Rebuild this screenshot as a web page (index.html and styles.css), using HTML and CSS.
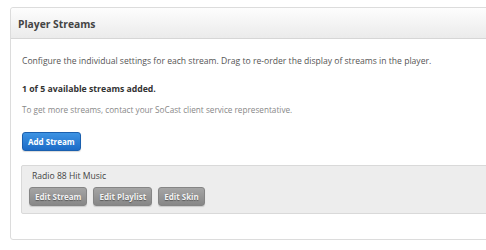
FILE: index.html
```html
<!DOCTYPE html>
<html lang="en">
<head>
  <meta charset="UTF-8" />
  <title>Player Streams</title>
  <link rel="stylesheet" href="styles.css">
</head>
<body>
  <div class="page">
    <div class="panel">
      <div class="panel-head">Player Streams</div>
      <div class="panel-body">
        <p class="intro">Configure the individual settings for each stream. Drag to re-order the display of streams in the player.</p>
        <p class="count">1 of 5 available streams added.</p>
        <p class="hint">To get more streams, contact your SoCast client service representative.</p>
        <button class="blue-button">Add Stream</button>

        <div class="stream">
          <div class="stream-name">Radio 88 Hit Music</div>
          <div class="stream-actions">
            <button class="gray-button">Edit Stream</button>
            <button class="gray-button">Edit Playlist</button>
            <button class="gray-button">Edit Skin</button>
          </div>
        </div>
      </div>
    </div>
  </div>
</body>
</html>
```

FILE: styles.css
```css
body {
  margin: 0;
  font-family: 'Open Sans', sans-serif;
  background: #fff;
  color: #555;
}

.page {
  width: 486px;
  height: 250px;
  overflow: hidden;
  padding: 7px 0 0 10px;
  box-sizing: border-box;
}

.panel {
  width: 500px;
  border: 1px solid #dcdcdc;
  border-radius: 3px;
  height: 233px;
  box-sizing: border-box;
}

.panel-head {
  height: 30px;
  line-height: 32px;
  padding-left: 7px;
  font-size: 10.3px;
  font-weight: bold;
  color: #444;
  background: linear-gradient(#fdfdfd, #ebebeb);
  border-bottom: 1px solid #d6d6d6;
  border-radius: 3px 3px 0 0;
}

.panel-body {
  padding: 15px 0 0 11px;
}

.panel-body p {
  margin: 0;
}

.intro {
  font-size: 8.6px;
  line-height: 14px;
  color: #555;
}

.count {
  font-size: 8.7px;
  font-weight: bold;
  color: #333;
  margin-top: 14px !important;
  line-height: 14px;
}

.hint {
  font-size: 8.2px;
  color: #888;
  line-height: 13px;
  margin-top: 7px !important;
}

.blue-button {
  display: block;
  margin-top: 16px;
  height: 19px;
  padding: 0 5px;
  font-family: 'Open Sans', sans-serif;
  font-size: 8px;
  font-weight: bold;
  color: #fff;
  background: linear-gradient(#3d93e3, #1c6bc7);
  border: 1px solid #1a5fae;
  border-radius: 3px;
  box-shadow: 0 1px 1px rgba(0, 0, 0, 0.15);
}

.stream {
  margin-top: 14px;
  margin-left: -1px;
  background: #ededed;
  border: 1px solid #d9d9d9;
  border-radius: 2px;
  padding: 3px 0 0 7px;
  height: 49px;
  box-sizing: border-box;
}

.stream-name {
  font-size: 8.6px;
  color: #444;
  line-height: 14px;
  padding-left: 3px;
}

.stream-actions {
  display: flex;
  gap: 6px;
  margin-top: 4px;
}

.gray-button {
  height: 19px;
  padding: 0 5px;
  font-family: 'Open Sans', sans-serif;
  font-size: 8px;
  font-weight: bold;
  color: #f2f2f2;
  text-shadow: 0 1px 1px rgba(0, 0, 0, 0.4);
  background: linear-gradient(#a5a5a5, #878787);
  border: 1px solid #858585;
  border-radius: 3px;
  box-shadow: 0 1px 1px rgba(0, 0, 0, 0.15);
}
```
